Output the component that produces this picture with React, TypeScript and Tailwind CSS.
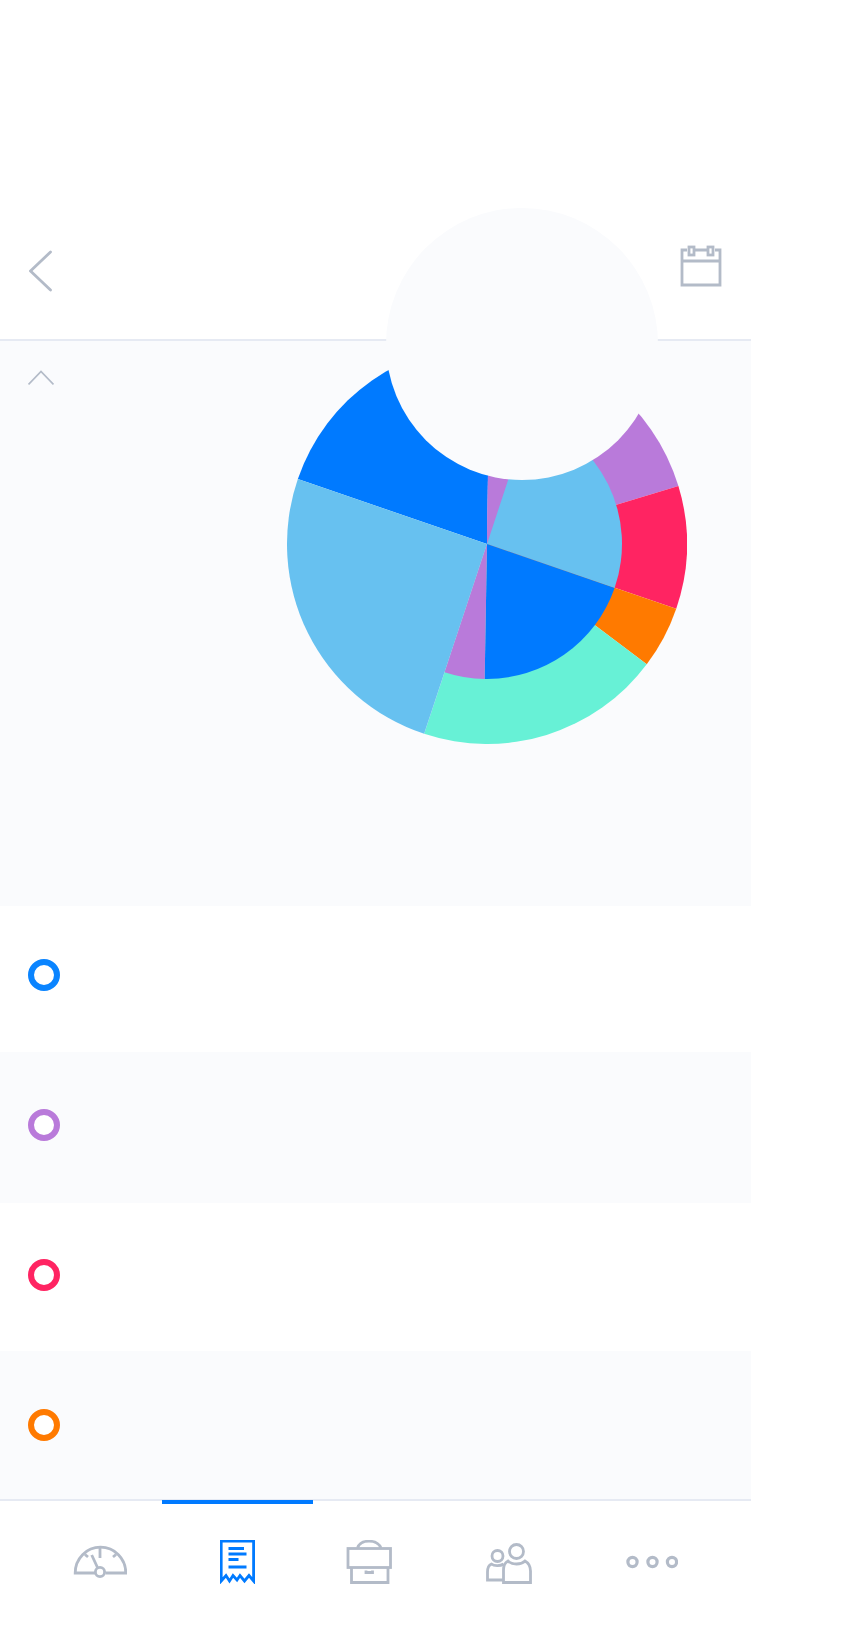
import React from 'react';

const CX = 200;
const CY = 200;

// slices run clockwise, points are directions from the centre of the chart
const wedge = (r: number, from: number[], to: number[]) => {
    const a = Math.atan2(from[1], from[0]);
    const b = Math.atan2(to[1], to[0]);
    const sweep = ((b - a) + Math.PI * 2) % (Math.PI * 2);
    const x1 = CX + r * Math.cos(a);
    const y1 = CY + r * Math.sin(a);
    const x2 = CX + r * Math.cos(b);
    const y2 = CY + r * Math.sin(b);
    return `M${CX} ${CY}L${x1} ${y1}A${r} ${r} 0 ${sweep > Math.PI ? 1 : 0} 1 ${x2} ${y2}Z`;
};

const outer = [
    { color: '#007aff', from: [-565, -194], to: [3, -207] },
    { color: '#b97ada', from: [3, -207], to: [574, -174] },
    { color: '#ff2462', from: [574, -174], to: [567, 194] },
    { color: '#ff7a00', from: [567, 194], to: [478, 360] },
    { color: '#67f1d6', from: [478, 360], to: [-188, 568] },
    { color: '#67c1f0', from: [-188, 568], to: [-565, -194] },
];

const inner = [
    { color: '#b97ada', from: [3, -207], to: [64, -194] },
    { color: '#67c1f0', from: [64, -194], to: [382, 132] },
    { color: '#007aff', from: [382, 132], to: [-7, 405] },
    { color: '#b97ada', from: [-7, 405], to: [-188, 568] },
];

const Ring = ({ className }: { className: string }) => (
    <div className={`w-8 h-8 rounded-full border-[6px] bg-white ${className}`}></div>
);

const GaugeIcon = () => (
    <svg width="54" height="33" viewBox="73 1545 54 33" fill="none" stroke="#b3bbc8" strokeWidth="2.8">
        <path d="M95 1573H75.2C75.2 1558.5 86.5 1547.2 100.5 1547.2S125.8 1558.5 125.8 1573H105.5" />
        <circle cx="100" cy="1572" r="4.6" />
        <path d="M91.7 1555L97.5 1567.5M100 1547.5V1558M85 1554.5L88 1557M116 1554.5L113 1557" />
    </svg>
);

const ReceiptIcon = () => (
    <svg width="35" height="44" viewBox="220 1540 35 44" fill="none" stroke="#007aff" strokeWidth="2.8">
        <path d="M221.2 1581V1541.2H253.6V1581L249 1575.5L244.5 1581L240 1575.5L237 1580L233 1575.5L229.5 1581L226 1575.5Z" />
        <path d="M228.5 1548.5H244M228.5 1554H246.5M228.5 1559.5H238.5M228.5 1567H246.5" />
    </svg>
);

const BriefcaseIcon = () => (
    <svg width="46" height="44" viewBox="346 1540 46 44" fill="none" stroke="#b3bbc8" strokeWidth="2.8">
        <path d="M357.5 1548C359 1543.5 363 1541.2 369 1541.2S379 1543.5 381 1548" />
        <rect x="348" y="1548.5" width="42.5" height="19" />
        <path d="M351.5 1567.5V1582.5H388V1567.5M366 1570.5V1572.5H372.5V1570.5" />
    </svg>
);

const PeopleIcon = () => (
    <svg width="48" height="42" viewBox="485 1542 48 42" fill="none" stroke="#b3bbc8" strokeWidth="2.8">
        <circle cx="516.5" cy="1551.5" r="7" />
        <circle cx="497.5" cy="1556" r="5.5" />
        <path d="M503 1580H487.5V1572C487.5 1567.5 489 1565 491.5 1564C494 1566 500 1566.5 503.5 1564" />
        <path d="M503.5 1582.5V1570C503.5 1565.5 505 1562.5 508 1561C512 1565 521 1565 525 1561C528.5 1563 530.5 1566.5 530.5 1571V1582.5Z" />
    </svg>
);

const DotsIcon = () => (
    <svg width="52" height="14" viewBox="626 1555 52 14" fill="none" stroke="#b3bbc8" strokeWidth="3.2">
        <circle cx="632.5" cy="1562" r="4.6" />
        <circle cx="652.5" cy="1562" r="4.6" />
        <circle cx="672" cy="1562" r="4.6" />
    </svg>
);

export default function App() {
    return (
        <div className="relative w-[858px] h-[1626px] bg-white overflow-hidden">
            <div className="w-[751px]">
                <header className="h-[341px] border-b-2 border-[#e6eaf3] pt-[245px] pl-[29px] pr-[29px] flex justify-between items-start">
                    <svg className="mt-[5px]" width="24" height="42" viewBox="0 0 24 42" fill="none" stroke="#b3bbc8" strokeWidth="2.8" strokeLinecap="round">
                        <path d="M21.5 2L1.5 21L21.5 40" />
                    </svg>
                    <svg width="42" height="42" viewBox="0 0 42 42" fill="none" stroke="#b3bbc8" strokeWidth="2.8">
                        <path d="M7 5H2V40H40V5H35M15 5H27M2 16H40" />
                        <rect x="9" y="2" width="5" height="8" />
                        <rect x="28" y="2" width="5" height="8" />
                    </svg>
                </header>

                <section className="h-[565px] bg-[#fafbfd] flex items-start">
                    <svg className="ml-[28px] mt-[29px]" width="26" height="16" viewBox="0 0 26 16" fill="none" stroke="#b3bbc8" strokeWidth="1.8">
                        <path d="M0.5 14.5L13 1.5L25.5 14.5" />
                    </svg>
                    <svg className="ml-[232.7px] mt-[3px]" width="400" height="400" viewBox="0 0 400 400">
                        {outer.map((s, i) => <path key={i} d={wedge(200, s.from, s.to)} fill={s.color} />)}
                        {inner.map((s, i) => <path key={i} d={wedge(135, s.from, s.to)} fill={s.color} />)}
                    </svg>
                </section>

                <div className="h-[146px] bg-white pl-[27.5px] pt-[53px]"><Ring className="border-[#0a84ff]" /></div>
                <div className="h-[151px] bg-[#fafbfd] pl-[27.5px] pt-[57px]"><Ring className="border-[#b97ada]" /></div>
                <div className="h-[148px] bg-white pl-[27.5px] pt-[56px]"><Ring className="border-[#ff2462]" /></div>
                <div className="h-[148px] bg-[#fafbfd] pl-[27.5px] pt-[58px]"><Ring className="border-[#ff7a00]" /></div>

                <nav className="relative border-t-2 border-[#e6eaf3] flex items-start pt-[39px]">
                    <div className="absolute left-[162px] top-[-1px] w-[151px] h-[4px] bg-[#007aff]"></div>
                    <div className="ml-[73px] mt-[5px]"><GaugeIcon /></div>
                    <div className="ml-[93px]"><ReceiptIcon /></div>
                    <div className="ml-[91px]"><BriefcaseIcon /></div>
                    <div className="ml-[93px] mt-[2px]"><PeopleIcon /></div>
                    <div className="ml-[93px] mt-[15px]"><DotsIcon /></div>
                </nav>
            </div>

            {/* the pale disc sits on top of the header line and the chart */}
            <div className="absolute left-[386px] top-[208px] w-[272px] h-[272px] rounded-full bg-[#fafbfd]"></div>
        </div>
    );
}
